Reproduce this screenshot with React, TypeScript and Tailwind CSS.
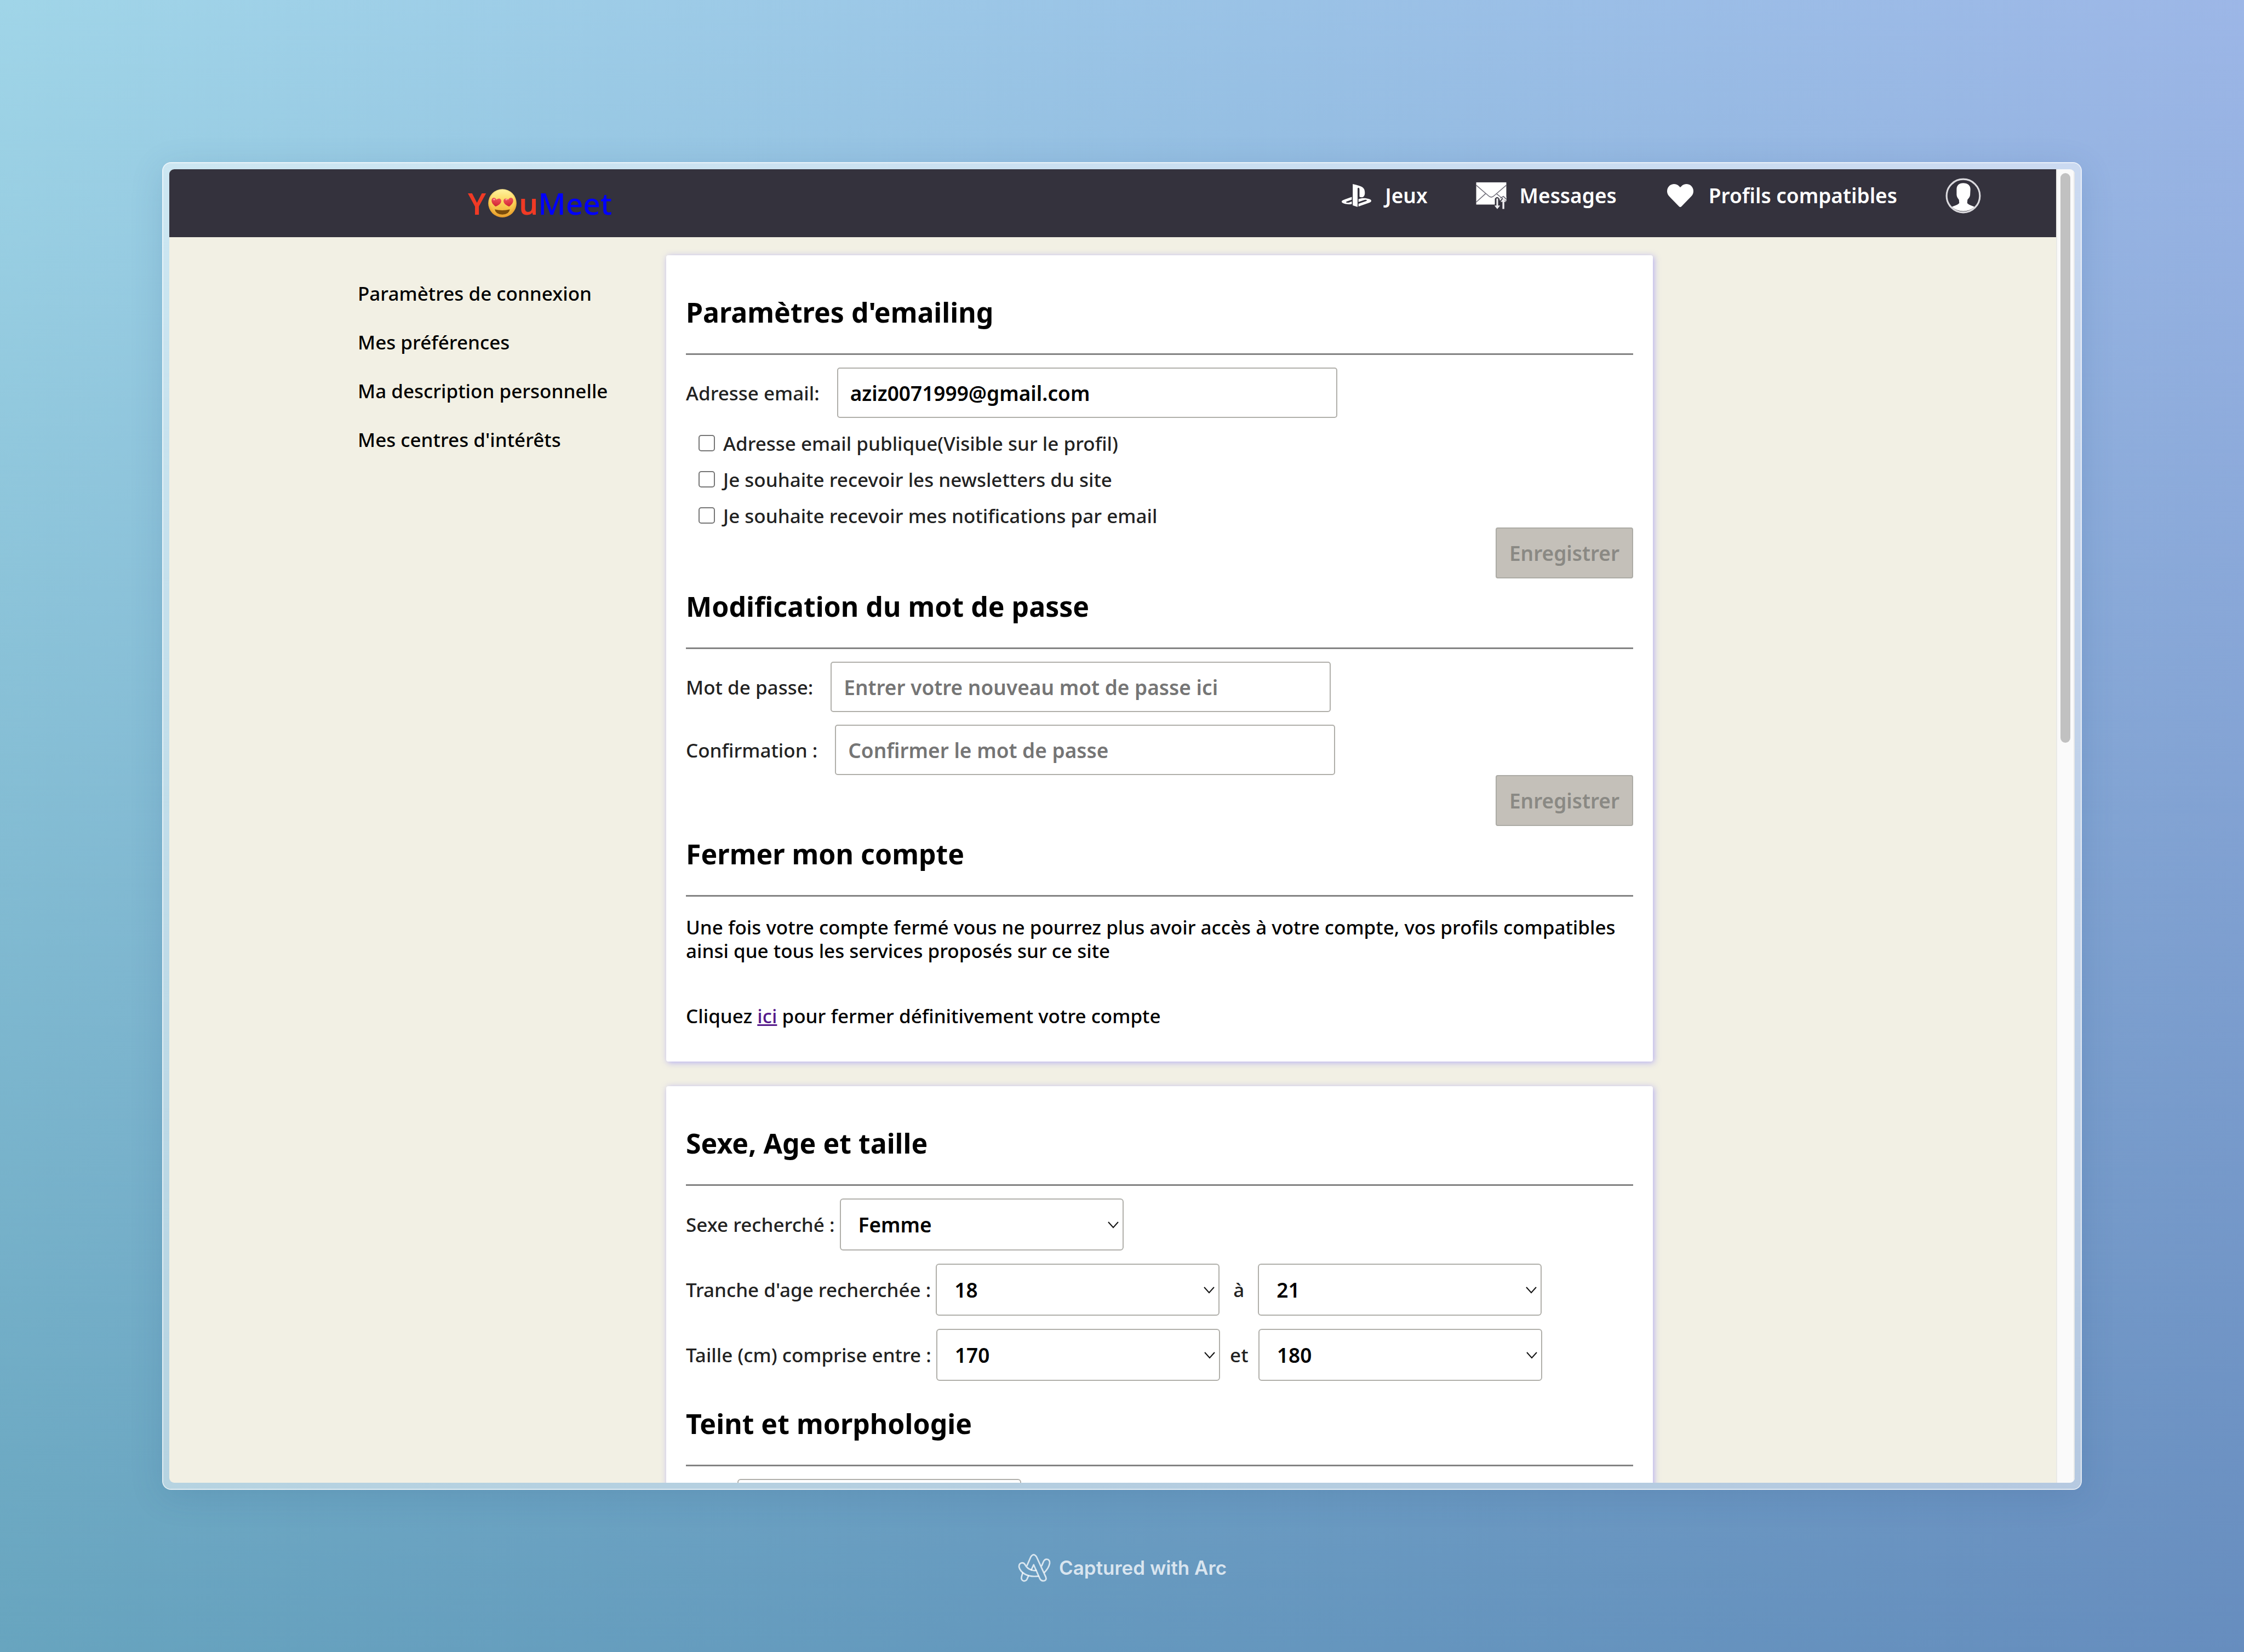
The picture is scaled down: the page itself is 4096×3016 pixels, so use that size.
import { useState } from "react";
import type { ReactNode } from "react";
import { FaHeart, FaPlaystation } from "react-icons/fa";

function HeartEyes() {
  const heart = "M0 32 C-12 24 -34 12 -33 -10 C-32 -28 -10 -32 0 -14 C10 -32 32 -28 33 -10 C34 12 12 24 0 32 Z";
  return (
    <svg viewBox="235 86 194 194" className="h-[52px] w-[52px]" role="img" aria-label="o">
      <defs>
        <linearGradient id="face" x1="0" y1="0" x2="0" y2="1">
          <stop offset="0" stopColor="#fff3a0" />
          <stop offset="0.45" stopColor="#fbd75c" />
          <stop offset="1" stopColor="#eda52f" />
        </linearGradient>
        <radialGradient id="rim" cx="0.5" cy="0.45" r="0.55">
          <stop offset="0.75" stopColor="#f2a72b" stopOpacity="0" />
          <stop offset="1" stopColor="#e0962a" stopOpacity="0.8" />
        </radialGradient>
        <linearGradient id="eye" x1="0" y1="0" x2="0" y2="1">
          <stop offset="0" stopColor="#f0555c" />
          <stop offset="1" stopColor="#cf2330" />
        </linearGradient>
      </defs>
      <circle cx="332" cy="183" r="96" fill="url(#face)" />
      <circle cx="332" cy="183" r="96" fill="url(#rim)" />
      <path d={heart} transform="translate(290 174) rotate(8)" fill="url(#eye)" />
      <path d={heart} transform="translate(374 174) rotate(-8)" fill="url(#eye)" />
      <ellipse cx="276" cy="158" rx="7" ry="5" fill="#ffb3b3" opacity="0.8" />
      <ellipse cx="359" cy="158" rx="7" ry="5" fill="#ffb3b3" opacity="0.8" />
      <path d="M280 225 Q332 238 383 225 Q378 259 332 260 Q286 259 280 225 Z" fill="#7b4c0c" />
    </svg>
  );
}

function Envelope() {
  return (
    <svg viewBox="960 56 214 192" className="h-[51px] w-[57px]" aria-hidden="true">
      <rect x="962" y="58" width="210" height="155" fill="#fff" />
      <g fill="none" stroke="#6f6d78" strokeWidth="6">
        <path d="M962 78 L1048 152 Q1067 170 1086 152 L1172 78" />
        <path d="M962 196 L1028 136" />
        <path d="M1104 138 L1172 190" />
      </g>
      <path
        d="M1092 213 V172 Q1108 150 1124 172 L1128 186 L1152 160 L1174 182 V248 H1088 Z"
        fill="#34323d"
      />
      <path d="M1124 150 L1172 190 V160 L1156 146 Z" fill="#fff" />
      <path d="M1130 168 L1152 156 L1172 176" fill="none" stroke="#6f6d78" strokeWidth="7" />
      <path
        d="M1103 170 h12 v50 h14 l-20 25 l-20 -25 h14 Z M1145 244 v-50 h-13 l18 -24 l20 24 h-12 v50 Z"
        fill="#ecebee"
      />
    </svg>
  );
}

function Avatar() {
  return (
    <svg viewBox="36 36 242 242" className="h-[65px] w-[65px]" role="img" aria-label="Mon profil">
      <path
        d="M157 70 C128 70 112 86 112 112 L112 150 C114 168 122 176 128 184 L130 206 C122 218 100 222 80 232 A116 116 0 0 0 234 232 C214 222 192 218 184 206 L186 184 C192 176 202 168 204 150 L206 112 C206 86 188 70 157 70 Z"
        fill="#fff"
      />
      <circle cx="157" cy="157" r="113" fill="none" stroke="#dad9dd" strokeWidth="12" />
    </svg>
  );
}

function ArcLogo() {
  return (
    <svg viewBox="80 94 223 194" className="h-[53px] w-[62px]" aria-hidden="true">
      <g fill="none" stroke="currentColor" strokeWidth="10" strokeLinecap="round" strokeLinejoin="round">
        <path d="M143 174 L168 117 Q187 88 206 117 L268 252 Q275 271 258 277 Q239 281 229 264 L187 170 L171 204" />
        <path d="M203 207 Q190 211 172 205 Q144 196 130 170 Q123 157 110 157 Q88 160 89 184 Q96 213 128 232 Q164 253 218 246" />
        <path d="M114 224 L106 250 Q101 272 120 278 Q138 280 144 263 L152 245" />
        <path d="M241 176 L254 146 Q264 128 282 134 Q296 141 294 160 Q288 192 260 220" />
      </g>
    </svg>
  );
}

function NavLink({ icon, children }: { icon: ReactNode; children: ReactNode }) {
  return (
    <a href="#" className="flex items-center gap-6 whitespace-nowrap text-[37px] leading-[50px] font-semibold text-white">
      <span className="flex w-14 justify-center">{icon}</span>
      {children}
    </a>
  );
}

function Title({ children }: { children: ReactNode }) {
  return (
    <h2 className="mb-[23px] border-b-3 border-[#838383] pb-[41px] text-[50px] leading-[68px] font-bold text-black">
      {children}
    </h2>
  );
}

function Field({ id, label, ...rest }: { id: string; label: string; type: string; placeholder?: string; defaultValue?: string }) {
  return (
    <div className="flex items-center gap-8">
      <label htmlFor={id}>{label}</label>
      <input
        id={id}
        {...rest}
        className="h-[92px] w-[913px] rounded-[5px] border-2 border-[#b0afaa] bg-white px-[22px] text-[37px] font-semibold text-black placeholder:text-[#757575]"
      />
    </div>
  );
}

function Check({ id, label }: { id: string; label: string }) {
  return (
    <div className="flex h-11 items-center gap-[15px]">
      <input id={id} type="checkbox" className="size-[30px] appearance-none rounded-[5px] border-2 border-[#767676] bg-white" />
      <label htmlFor={id}>{label}</label>
    </div>
  );
}

function Save() {
  return (
    <div className="mb-[17px] flex justify-end">
      <button
        type="submit"
        disabled
        className="h-[93px] w-[251px] rounded-[4px] border-2 border-[#acaba5] bg-[#c4c0b9] text-[37px] font-semibold text-[#8a8984]"
      >
        Enregistrer
      </button>
    </div>
  );
}

function Select({ id, name, value, options }: { id: string; name?: string; value: string; options: string[] }) {
  const [current, setCurrent] = useState(value);
  return (
    <span className="relative block w-[518px]">
      <select
        id={id}
        aria-label={name}
        value={current}
        onChange={(e) => setCurrent(e.target.value)}
        className="h-[95px] w-full appearance-none rounded-[6px] border-2 border-[#b0afaa] bg-white px-8 text-[37px] font-semibold text-black"
      >
        {options.map((o) => (
          <option key={o}>{o}</option>
        ))}
      </select>
      <svg viewBox="0 0 20 14" className="pointer-events-none absolute top-[41px] right-[9px] h-[14px] w-5" aria-hidden="true">
        <path d="M1 2 L10 12 L19 2" fill="none" stroke="#111" strokeWidth="2" />
      </svg>
    </span>
  );
}

function Card({ children }: { children: ReactNode }) {
  return (
    <section className="rounded-[4px] bg-white px-9 pt-[70px] pb-[62px] shadow-[2px_2px_12px_rgba(120,110,255,0.5)]">
      {children}
    </section>
  );
}

const links = ["Paramètres de connexion", "Mes préférences", "Ma description personnelle", "Mes centres d'intérêts"];

export default function App() {
  return (
    <div className="flex h-screen flex-col bg-[linear-gradient(to_bottom,#ffffff,#a6c9d2),linear-gradient(100deg,#a0d5e8,#9ac2e6_50%,#9db3e7)] bg-blend-multiply font-['Noto_Sans',sans-serif] text-[35px] leading-[43px] font-medium text-[#222]">
      <div className="mx-[296px] mt-[296px] flex min-h-0 flex-1 rounded-[16px] border-2 border-white/80 bg-white/50 bg-clip-padding p-[11px] shadow-[0_12px_60px_rgba(40,80,130,0.16)]">
        <div className="flex min-w-0 flex-1 overflow-hidden rounded-[9px] bg-[#f2f0e4]">
          <div className="flex min-w-0 flex-1 flex-col overflow-hidden">
            <header className="flex h-[124px] shrink-0 items-center justify-between bg-[#34323d] pr-[137px] pl-[545px]">
              <a href="#" className="flex items-center text-[55px] leading-[72px]">
                <span className="pr-1 font-semibold text-[#f03a25]">Y</span>
                <HeartEyes />
                <span className="pl-1 font-semibold text-[#f03a25]">u</span>
                <span className="text-[#0000ff]">Meet</span>
              </a>
              <nav className="flex items-center gap-[88px] pb-7">
                <NavLink icon={<FaPlaystation className="size-[54px]" />}>Jeux</NavLink>
                <NavLink icon={<Envelope />}>Messages</NavLink>
                <NavLink icon={<FaHeart className="size-12" />}>Profils compatibles</NavLink>
                <a href="#"><Avatar /></a>
              </nav>
            </header>

            <div className="grid min-h-0 flex-1 grid-cols-[907fr_1801fr_736fr] items-start">
              <aside className="pt-[81px] pl-[344px]">
                <ul className="flex flex-col gap-[46px] whitespace-nowrap text-black">
                  {links.map((l) => (
                    <li key={l}><a href="#">{l}</a></li>
                  ))}
                </ul>
              </aside>

              <main className="flex flex-col gap-[45px] pt-[33px]">
                <Card>
                  <Title>Paramètres d'emailing</Title>
                  <Field id="email" label="Adresse email:" type="email" defaultValue="aziz0071999@gmail.com" />
                  <div className="mt-6 flex flex-col gap-[22px] pl-[23px]">
                    <Check id="public" label="Adresse email publique(Visible sur le profil)" />
                    <Check id="news" label="Je souhaite recevoir les newsletters du site" />
                    <Check id="notif" label="Je souhaite recevoir mes notifications par email" />
                  </div>
                  <Save />

                  <Title>Modification du mot de passe</Title>
                  <div className="flex flex-col gap-[23px]">
                    <Field id="password" label="Mot de passe:" type="password" placeholder="Entrer votre nouveau mot de passe ici" />
                    <Field id="confirm" label="Confirmation :" type="password" placeholder="Confirmer le mot de passe" />
                  </div>
                  <Save />

                  <Title>Fermer mon compte</Title>
                  <div className="flex flex-col gap-[76px] pt-[11px] text-black">
                    <p>
                      Une fois votre compte fermé vous ne pourrez plus avoir accès à votre compte, vos profils compatibles
                      ainsi que tous les services proposés sur ce site
                    </p>
                    <p>
                      Cliquez <a href="#" className="text-[#551a8b] underline">ici</a> pour fermer définitivement votre compte
                    </p>
                  </div>
                </Card>

                <Card>
                  <Title>Sexe, Age et taille</Title>
                  <div className="mb-11 flex flex-col gap-6">
                    <div className="flex items-center gap-[9px]">
                      <label htmlFor="sexe">Sexe recherché :</label>
                      <Select id="sexe" value="Femme" options={["Femme", "Homme"]} />
                    </div>
                    <div className="flex items-center">
                      <label htmlFor="age-min" className="pr-[9px]">Tranche d'age recherchée :</label>
                      <Select id="age-min" value="18" options={["18", "19", "20", "21"]} />
                      <label htmlFor="age-max" className="w-[70px] text-center">à</label>
                      <Select id="age-max" value="21" options={["18", "19", "20", "21"]} />
                    </div>
                    <div className="flex items-center">
                      <label htmlFor="size-min" className="pr-[9px]">Taille (cm) comprise entre :</label>
                      <Select id="size-min" value="170" options={["160", "170", "180"]} />
                      <label htmlFor="size-max" className="w-[70px] text-center">et</label>
                      <Select id="size-max" value="180" options={["160", "170", "180"]} />
                    </div>
                  </div>

                  <Title>Teint et morphologie</Title>
                  <div className="pl-[94px]">
                    <Select id="teint" name="Teint" value="" options={[""]} />
                  </div>
                </Card>
              </main>
            </div>
          </div>

          <div className="w-[34px] shrink-0 border-x-2 border-[#e9e9e7] bg-[#fafafa] px-[6px] pt-[7px]">
            <div className="h-[43.5%] rounded-full bg-[#c1c1c1]" />
          </div>
        </div>
      </div>

      <footer className="flex h-[296px] shrink-0 items-center justify-center gap-[14px] pb-3 font-['Inter',sans-serif] text-[35px] font-semibold text-white/75">
        <ArcLogo />
        Captured with Arc
      </footer>
    </div>
  );
}
